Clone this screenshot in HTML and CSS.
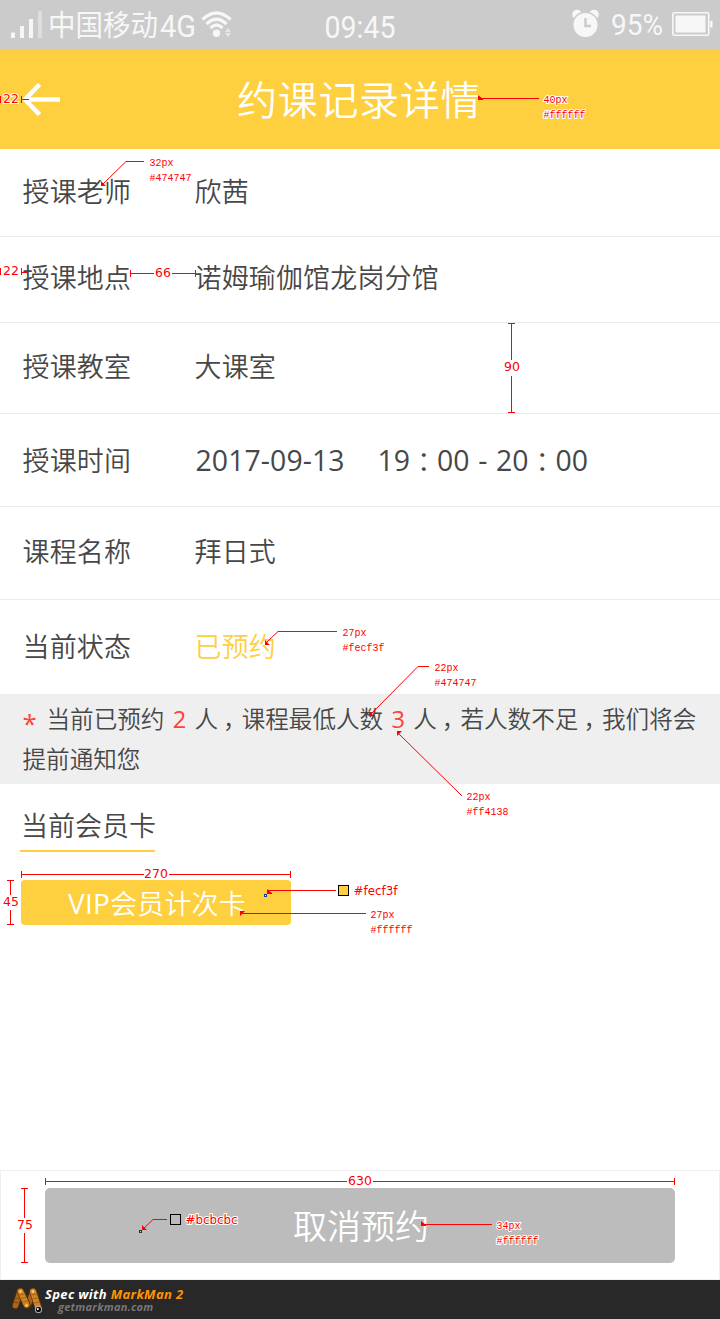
FILE: index.html
```html
<!DOCTYPE html>
<html lang="zh-CN">
<head>
<meta charset="utf-8">
<title>约课记录详情</title>
<link rel="stylesheet" href="styles.css">
</head>
<body>
<div class="page">
  <header class="status">
    <svg class="status-art" width="720" height="50" viewBox="0 0 720 50">
      <g fill="#f7f7f7">
        <rect x="11" y="32.5" width="4" height="5.500"/><rect x="20" y="26" width="4" height="12"/><rect x="29" y="19" width="4" height="19"/>
        <rect x="38" y="11" width="4" height="27" fill="#dedede"/>
        <text class="cjk" x="48" y="35.500" font-size="29" textLength="110" lengthAdjust="spacingAndGlyphs">中国移动</text>
        <text class="latin" x="160" y="36.500" font-size="32" textLength="36" lengthAdjust="spacingAndGlyphs">4G</text>
        <text class="latin" x="324.500" y="37.500" font-size="32" textLength="71" lengthAdjust="spacingAndGlyphs">09:45</text>
        <text class="latin" x="611" y="34.500" font-size="29" textLength="52" lengthAdjust="spacingAndGlyphs">95%</text>
        <circle cx="216.500" cy="33.200" r="3.700"/>
        <path d="M228 28l3 4h-6zM228 37l3-4h-6z" opacity=".65"/>
      </g>
      <g fill="none" stroke="#f7f7f7" stroke-width="3.200">
        <path d="M202.500 19.500Q216.500 6.500 230.500 19.500M206.500 24Q216.500 14.500 226.500 24M210.500 28Q216.500 22 222.500 28"/>
      </g>
      <g fill="#f7f7f7">
        <circle cx="577" cy="14.500" r="4.800"/><circle cx="594" cy="14.500" r="4.800"/>
        <circle cx="585.500" cy="25" r="12.800" stroke="#cbcbcb" stroke-width="1.500"/>
        <path d="M585.500 18v8h5.500" fill="none" stroke="#cbcbcb" stroke-width="2.500"/>
        <rect x="675.500" y="15.500" width="30" height="17"/>
        <rect x="672.800" y="12.800" width="35.900" height="22.400" rx="1.500" fill="none" stroke="#f7f7f7" stroke-width="1.600"/>
        <rect x="710" y="21" width="2.500" height="6.500"/>
      </g>
    </svg>
  </header>

  <div class="titlebar">
    <svg class="back" width="40" height="34" viewBox="0 0 40 34"><path d="M38 16.500H4M17.500 1.500L3 16.500L17.500 31.500" fill="none" stroke="#fff" stroke-width="4.500"/></svg>
    <h1 class="title">约课记录详情</h1>
  </div>

  <main class="content">
    <div class="row teacher"><span class="label">授课老师</span><span class="value">欣茜</span></div>
    <div class="row place"><span class="label">授课地点</span><span class="value">诺姆瑜伽馆龙岗分馆</span></div>
    <div class="row room"><span class="label">授课教室</span><span class="value">大课室</span></div>
    <div class="row time"><span class="label">授课时间</span><span class="value when"><span class="date">2017-09-13</span><span class="pair">19</span><span class="colon">：</span><span class="pair">00</span><span class="dash">-</span><span class="pair">20</span><span class="colon">：</span><span class="pair">00</span></span></div>
    <div class="row course"><span class="label">课程名称</span><span class="value">拜日式</span></div>
    <div class="row state"><span class="label">当前状态</span><span class="value booked">已预约</span></div>

    <p class="notice"><span class="star">*</span>当前已预约<span class="count">2</span>人<span class="comma">，</span>课程最低人数<span class="count">3</span>人<span class="comma">，</span>若人数不足<span class="comma">，</span>我们将会<br>提前通知您</p>

    <section class="cards">
      <h2 class="cards-title">当前会员卡</h2>
      <div class="card"><span class="vip">VIP</span>会员计次卡</div>
    </section>
  </main>

  <div class="actions"><button class="cancel">取消预约</button></div>

  <footer class="credit">
    <svg class="logo" width="34" height="28" viewBox="0 0 34 28">
      <g fill="none" stroke-linecap="round">
        <path d="M4.500 19L9 5M17 18L22 5" stroke="#5a3208" stroke-width="7"/>
        <path d="M4.500 18.500L9 4.500M17.500 17L22 5" stroke="#a9661a" stroke-width="5.500"/>
        <path d="M9.500 4.500L16 18M22 4.500L27.500 20" stroke="#5a3208" stroke-width="7.500"/>
        <path d="M9.500 4.500L15.500 17.500M22 4.500L27 20" stroke="#cf8525" stroke-width="6"/>
        <path d="M8 8L13.500 7M9.500 11.500L15 10.500M11.500 15L17 14M20.500 8L26 7M21.500 12L27 11M23 16L28.500 15" stroke="#9a5a12" stroke-width=".8"/>
        <path d="M4 11L8.500 12M3 15L7.500 16" stroke="#784309" stroke-width=".8"/>
      </g>
      <g fill="#ffd884"><circle cx="9.500" cy="4.500" r="1.200"/><circle cx="22" cy="4.500" r="1.200"/><circle cx="15.500" cy="18.500" r="1.200"/></g>
      <circle cx="27.500" cy="22.500" r="3.500" fill="#ccc"/><circle cx="27.500" cy="22.500" r="2.700" fill="#111"/><circle cx="26.800" cy="22" r="1" fill="#fff"/>
    </svg>
    <div class="credit-text">
      <div class="credit-main">Spec with <span class="brand">MarkMan 2</span></div>
      <div class="credit-site">getmarkman.com</div>
    </div>
  </footer>

  <svg class="marks" width="720" height="1319" viewBox="0 0 720 1319">
    <g class="lines">
      <path d="M0.500 96v7M21.500 96v7M22 99.500h7"/>
      <path d="M0.500 268v7M21.500 268v7M22 272.500h6"/>
      <path d="M130.500 270v7M131 273.500h23M172 273.500h23M195.500 270v7"/>
      <path d="M508 323.500h7M511.500 324v36M511.500 376v36M508 412.500h7"/>
      <path d="M21.500 871v7M22 874.500h122M169 874.500h121M290.500 871v7"/>
      <path d="M7 880.500h7M10.500 881v14M10.500 910v14M7 924.500h7"/>
      <path d="M45.500 1178v7M46 1181.500h301M373 1181.500h301M674.500 1178v7"/>
      <path d="M21 1188.500h7M24.500 1189v29M24.500 1233v29M21 1262.500h7"/>
      <path d="M478 98.500h61M144 161.500h-18L102 185M337 631.500h-59L266 643M429 666.500h-11L371 714M462 796L398 733M336 890.500h-69M366 913.500h-125M167 1219.500h-14L142 1230M492 1224.500h-70"/>
    </g>
    <path class="tips" d="M478 95l5 4v1h-5zM101 186v-5l5 5zM265 645v-5l5 5zM369 716v-5l5 5zM397 736v-5h5zM267 889l5 4v1h-5zM240 916v-5h5zM142 1230v-5l5 5zM421 1221l5 4v1h-5z"/>
    <rect x="264.500" y="894.500" width="2" height="2" fill="#fff" stroke="#1534a0"/>
    <rect x="139.500" y="1230.500" width="2" height="2" fill="#bcbcbc" stroke="#333"/>
    <rect x="338.500" y="885.500" width="10" height="10" fill="#fecf3f" stroke="#000"/>
    <rect x="170.500" y="1214.500" width="10" height="10" fill="#bcbcbc" stroke="#000"/>
    <g class="num">
      <text x="3" y="103" textLength="16">22</text>
      <text x="3" y="275" textLength="16">22</text>
      <text x="155" y="277" textLength="16">66</text>
      <text x="504" y="371" textLength="16">90</text>
      <text x="144" y="878" textLength="24">270</text>
      <text x="3" y="906" textLength="16">45</text>
      <text x="348" y="1185" textLength="24">630</text>
      <text x="17" y="1229" textLength="16">75</text>
      <text class="hex" x="353.500" y="895" textLength="44">#fecf3f</text>
      <text class="hex" x="185.500" y="1224" textLength="52">#bcbcbc</text>
    </g>
    <g class="note">
      <text x="543.500" y="103">40px</text><text x="543.500" y="118">#ffffff</text>
      <text x="149.500" y="166">32px</text><text x="149.500" y="181">#474747</text>
      <text x="342.500" y="636">27px</text><text x="342.500" y="651">#fecf3f</text>
      <text x="434.500" y="671">22px</text><text x="434.500" y="686">#474747</text>
      <text x="466.500" y="800">22px</text><text x="466.500" y="815">#ff4138</text>
      <text x="370.500" y="918">27px</text><text x="370.500" y="933">#ffffff</text>
      <text x="496.500" y="1229">34px</text><text x="496.500" y="1244">#ffffff</text>
    </g>
  </svg>
</div>
</body>
</html>
```
FILE: styles.css
```css
* { box-sizing: border-box; }
body { margin: 0; background: #fff; }
.page {
  position: relative;
  display: flex;
  flex-direction: column;
  width: 720px;
  height: 1319px;
  overflow: hidden;
  color: #474747;
  font-family: "Noto Sans CJK SC", "Noto Sans", sans-serif;
  font-weight: 350;
  white-space: nowrap;
}
h1, h2, p { margin: 0; font-weight: inherit; }

.status { height: 50px; background: #cbcbcb; }
.status-art { display: block; }
.latin { font-family: Roboto, "Liberation Sans", sans-serif; font-weight: 400; }
.cjk { font-family: "Noto Sans CJK SC", sans-serif; font-weight: 400; }

.titlebar { display: flex; align-items: center; height: 99px; padding-left: 22px; background: #fecf3f; }
.back { display: block; flex: none; }
.title { margin-left: 175px; padding-bottom: 3px; font-size: 40px; line-height: 60px; letter-spacing: 0.7px; color: #fff; }

.content { flex: 1; }
.row { display: flex; align-items: center; padding-left: 22.5px; border-bottom: 1px solid #ececec; font-size: 27px; line-height: 40px; letter-spacing: 0.15px; }
.label { width: 172px; }
.teacher { height: 88px; padding-bottom: 4px; }
.place { height: 86px; padding-bottom: 6px; }
.room { height: 91px; padding-bottom: 4px; }
.time { height: 93px; padding-bottom: 1px; }
.course { height: 93px; padding-bottom: 4px; }
.state { height: 94px; padding-bottom: 2px; border-bottom: 0; }
.booked { color: #fecf3f; }
.when { display: flex; padding-left: 1px; font-family: "Open Sans", "Noto Sans", sans-serif; font-weight: 400; font-size: 28.4px; letter-spacing: 0; }
.date { width: 182px; letter-spacing: 0.1px; }
.pair { width: 32.5px; }
.colon { width: 27px; text-indent: 7px; letter-spacing: -10px; font-family: "Noto Sans CJK SC", sans-serif; font-weight: 350; font-size: 27px; }
.dash { width: 26.5px; text-align: center; }

.notice { height: 90px; padding: 4px 0 0 22.5px; background: #efefef; font-size: 23.6px; line-height: 40px; }
.star { display: inline-block; width: 24px; color: #ff4138; font-family: "Open Sans", "Noto Sans", sans-serif; font-size: 26px; font-weight: 400; line-height: 20px; vertical-align: -5px; }
.count { display: inline-block; width: 30px; text-align: center; color: #ff4138; font-family: "Open Sans", "Noto Sans", sans-serif; font-weight: 400; line-height: 20px; }
.comma { display: inline-block; width: 23.6px; text-indent: 5px; letter-spacing: -8px; line-height: 20px; }

.cards { padding: 21px 20px 0; }
.cards-title { width: 135px; height: 47px; padding-left: 1px; border-bottom: 2px solid #fecf3f; font-size: 27px; line-height: 39px; }
.card { display: flex; justify-content: center; width: 270px; height: 45px; margin: 28px 0 0 1px; padding-left: 2px; border-radius: 4px; background: #fecf3f; color: #fff; font-size: 27px; line-height: 46px; letter-spacing: 0.2px; }
.vip { font-family: "Open Sans", "Noto Sans", sans-serif; font-weight: 400; font-size: 28px; }

.actions { display: flex; justify-content: center; height: 110px; padding-top: 17px; border: 1px solid #efefef; }
.cancel { width: 630px; height: 75px; padding: 0 0 3px 2px; border: 0; border-radius: 5px; background: #bcbcbc; color: #fff; font: inherit; font-size: 34px; }

.credit { display: flex; height: 39px; padding: 7px 0 0 11px; background: #282828; font-family: "Open Sans", sans-serif; font-style: italic; font-weight: 700; }
.logo { flex: none; }
.credit-main { color: #fff; font-size: 13px; line-height: 14px; letter-spacing: 0.35px; }
.brand { color: #ff9500; }
.credit-site { padding-left: 13px; color: #777; font-size: 11px; line-height: 12px; letter-spacing: 0.25px; }

.marks { position: absolute; inset: 0; }
.lines { fill: none; stroke: #f00; stroke-width: 1; }
.tips { fill: #f00; }
.num, .note { fill: #f00; stroke: #fff; stroke-width: 2px; paint-order: stroke; font-weight: 400; }
.num { font-family: "DejaVu Sans", sans-serif; font-size: 12.5px; }
.hex { font-size: 12px; }
.note { font-family: "Liberation Mono", monospace; font-size: 10px; }
```
